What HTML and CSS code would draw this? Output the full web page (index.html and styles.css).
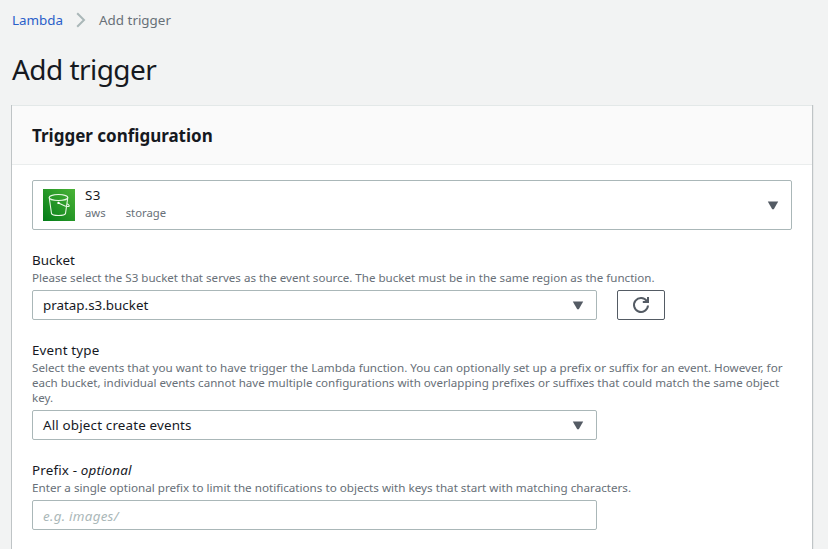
FILE: index.html
```html
<!DOCTYPE html>
<html lang="en">
<head>
<meta charset="utf-8">
<title>Add trigger</title>
<link rel="stylesheet" href="styles.css">
</head>
<body>
<nav class="crumbs">
  <a class="crumb-link" href="#">Lambda</a>
  <svg class="crumb-sep" width="10" height="16" viewBox="0 0 10 16"><path d="M1.200 1.200 8 8l-6.800 6.800" fill="none" stroke="#aab7b8" stroke-width="2"/></svg>
  <span class="crumb-current">Add trigger</span>
</nav>
<h1 class="title"><span>Add trigger</span></h1>
<main class="panel">
  <header class="panel-head"><h2>Trigger configuration</h2></header>
  <div class="panel-body">
    <div class="control service">
      <svg class="service-icon" width="32" height="32" viewBox="0 0 32 32">
        <defs><linearGradient id="g" x1="0" y1="1" x2="1" y2="0"><stop offset="0" stop-color="#037c18"/><stop offset="1" stop-color="#4ab336"/></linearGradient></defs>
        <rect width="32" height="32" fill="url(#g)"/>
        <g fill="none" stroke="#e9f8e5" stroke-width="1.100"><ellipse cx="15.500" cy="8.500" rx="9.300" ry="3"/><path d="M6.200 8.500 8.500 24.500c.8 2.600 13.200 2.600 14 0L24.800 8.500M15.500 13.900c4 2.100 9.800 4.300 10.700 3.300.4-.7-1-2-2.400-2.700"/></g>
        <circle cx="15.500" cy="13.900" r="1.200" fill="#fff"/>
      </svg>
      <div class="service-text">
        <div class="service-name">S3</div>
        <div class="tags"><span>aws</span><span>storage</span></div>
      </div>
      <svg class="caret" width="12" height="9" viewBox="0 0 12 9"><path d="M.8.500h10.400L6.800 8.300H5.200z" fill="#545b64"/></svg>
    </div>
    <section class="field">
      <div class="label">Bucket</div>
      <p class="hint">Please select the S3 bucket that serves as the event source. The bucket must be in the same region as the function.</p>
      <div class="row">
        <div class="control select"><span>pratap.s3.bucket</span><svg class="caret" width="12" height="9" viewBox="0 0 12 9"><path d="M.8.500h10.400L6.800 8.300H5.200z" fill="#545b64"/></svg></div>
        <button class="refresh" aria-label="Refresh"><svg width="18" height="18" viewBox="0 0 18 18" fill="none" stroke="#545b64" stroke-width="2"><path d="M16 9.500A7 7 0 1 1 14.800 5M16 1v5h-5.200"/></svg></button>
      </div>
    </section>
    <section class="field">
      <div class="label wide">Event type</div>
      <p class="hint"><span class="hint-wide">Select the events that you want to have trigger the Lambda function. You can optionally set up a prefix or suffix for an event. However, for</span><br>each bucket, individual events cannot have multiple configurations with overlapping prefixes or suffixes that could match the same object<br>key.</p>
      <div class="control select wide"><span>All object create events</span><svg class="caret" width="12" height="9" viewBox="0 0 12 9"><path d="M.8.500h10.400L6.800 8.300H5.200z" fill="#545b64"/></svg></div>
    </section>
    <section class="field">
      <div class="label wide">Prefix - <i>optional</i></div>
      <p class="hint hint-wide">Enter a single optional prefix to limit the notifications to objects with keys that start with matching characters.</p>
      <div class="control select placeholder"><span>e.g. images/</span></div>
    </section>
  </div>
</main>
</body>
</html>
```
FILE: styles.css
```css
* { box-sizing: border-box; }
html { overflow: hidden; }
body { margin: 0; height: 549px; overflow: hidden; background: #f2f3f3; color: #16191f; font: 13.4px/20px "Noto Sans", sans-serif; }
.crumbs { display: flex; align-items: center; height: 40px; padding-left: 12px; }
.crumb-link { color: #2a5fc9; text-decoration: none; }
.crumb-sep { margin: 0 13px; }
.crumb-current { color: #687078; }
.title { margin: 9px 0 16px 12px; height: 40px; font-size: 28px; line-height: 40px; font-weight: 400; letter-spacing: -.55px; }
.panel { margin: 0 16px 0 12px; height: 460px; background: #fff; border-top: 1px solid #e3e8e8; box-shadow: -1px 0 0 #bfc4c6, 1px 0 0 #bfc4c6, 2px 0 0 #e8eaea; }
.panel-head { height: 59px; border-bottom: 1px solid #eaeded; background: #fafafa; padding: 20px 20px 18px; }
.panel-head h2 { margin: 0; font-size: 17px; line-height: 20px; font-weight: 700; }
.panel-body { padding: 15px 20px; display: flex; flex-direction: column; gap: 20px; }
.control { display: flex; align-items: center; border: 1px solid #aab7b8; border-radius: 2px; background: #fff; }
.caret { margin-left: auto; }
.service { width: 760px; height: 50px; padding: 0 12px 0 10px; }
.service-text { margin-left: 10px; height: 40px; }
.service-name { line-height: 20px; letter-spacing: .3px; }
.tags { display: flex; gap: 20px; font-size: 11.3px; line-height: 15px; color: #687078; }
.label { height: 20px; }
.wide { letter-spacing: .16px; }
.hint { margin: 0 0 5px; font-size: 11.58px; line-height: 15px; color: #687078; white-space: nowrap; }
.hint-wide { font-size: 11.66px; }
.row { display: flex; gap: 20px; }
.select { width: 565px; height: 30px; padding: 0 12px 0 10px; }
.refresh { width: 48px; height: 30px; padding: 0; display: flex; align-items: center; justify-content: center; border: 1px solid #545b64; border-radius: 2px; background: #fff; }
.placeholder { padding-top: 2px; color: #aab7b8; letter-spacing: .26px; font-style: italic; }
```
